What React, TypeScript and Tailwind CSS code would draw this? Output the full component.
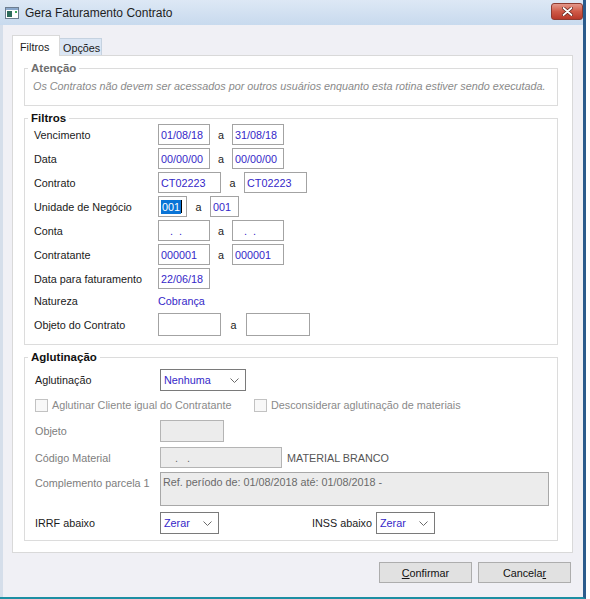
import React from "react";

type FieldProps = { w: string; children?: React.ReactNode; disabled?: boolean; h?: string };

function Field({ w, children, disabled = false, h = "h-[21px]" }: FieldProps) {
  return (
    <div
      className={`flex shrink-0 items-center whitespace-pre border pl-[2px] ${h} ${w} ${
        disabled ? "border-[#b4b4b4] bg-[#ececec] text-[#6a6a6a]" : "border-[#a3a3a3] bg-white text-[#3527c8]"
      }`}
    >
      {children}
    </div>
  );
}

function Sep({ w }: { w: string }) {
  return <span className={`shrink-0 text-center text-[#1a1a1a] ${w}`}>a</span>;
}

function Row({
  label,
  children,
  muted = false,
  lw = "w-[124px]",
  className = "h-[21px]",
}: {
  label: string;
  children?: React.ReactNode;
  muted?: boolean;
  lw?: string;
  className?: string;
}) {
  return (
    <div className={`flex items-center ${className}`}>
      <span className={`shrink-0 whitespace-nowrap ${lw} ${muted ? "text-[#7d7d7d]" : "text-[#1a1a1a]"}`}>{label}</span>
      {children}
    </div>
  );
}

function Combo({ w, value }: { w: string; value: string }) {
  return (
    <div
      className={`flex h-[22px] shrink-0 items-center justify-between border border-[#7a7a7a] bg-white pl-[3px] pr-[6px] text-[#3527c8] ${w}`}
    >
      <span>{value}</span>
      <svg width="9" height="5" viewBox="0 0 9 5" aria-hidden>
        <path d="M0.5 0.5 L4.5 4.5 L8.5 0.5" stroke="#6a6a6a" strokeWidth="1" fill="none" />
      </svg>
    </div>
  );
}

function Check({ label }: { label: string }) {
  return (
    <div className="flex items-center gap-[4px] whitespace-nowrap text-[#8a8a8a]">
      <span className="h-[13px] w-[13px] shrink-0 border border-[#c2c2c2] bg-[#f8f8f8]" />
      <span>{label}</span>
    </div>
  );
}

function Group({
  title,
  muted = false,
  children,
  className = "",
}: {
  title: string;
  muted?: boolean;
  children: React.ReactNode;
  className?: string;
}) {
  return (
    <fieldset className="border border-[#dcdcdc] bg-white">
      <legend
        className={`ml-[3px] px-[3px] text-[11.5px] font-bold leading-[12px] ${
          muted ? "text-[#6e6e6e]" : "text-[#111]"
        }`}
      >
        {title}
      </legend>
      <div className={className}>{children}</div>
    </fieldset>
  );
}

export default function App() {
  return (
    <div className="h-[599px] w-[590px] bg-white font-['Liberation_Sans',Arial,sans-serif] text-[10.8px] leading-[14px] text-[#1a1a1a]">
      <div className="flex h-[599px] w-[586px] flex-col border-r-[3px] border-b-[2px] border-r-[#2b5b8c] border-b-[#1d8fa3]">
        {/* title bar */}
        <div className="flex h-[25px] shrink-0 items-center bg-gradient-to-b from-[#dde8f5] to-[#c8daee] pl-[5px]">
          <svg width="14" height="12" viewBox="0 0 14 12" aria-hidden>
            <rect x="0.5" y="0.5" width="13" height="11" fill="#ffffff" stroke="#6c7d90" />
            <rect x="1" y="1" width="12" height="2" fill="#8aa8cc" />
            <rect x="2" y="4" width="5" height="6" fill="#2e6b5c" />
            <rect x="10" y="4" width="2" height="2" fill="#3fa85a" />
          </svg>
          <span className="ml-[6px] text-[12px] text-[#1e1e1e]">Gera Faturamento Contrato</span>
          <div className="ml-auto mt-[-3px] flex h-[17px] w-[32px] items-center justify-center rounded-[3px] border border-[#8e3b30] bg-gradient-to-b from-[#e3978a] via-[#cf5a47] to-[#b8392a]">
            <svg width="11" height="9" viewBox="0 0 11 9" aria-hidden>
              <path d="M1.5 1 L9.5 8 M9.5 1 L1.5 8" stroke="#5a1b14" strokeWidth="3.2" strokeLinecap="round" />
              <path d="M1.5 1 L9.5 8 M9.5 1 L1.5 8" stroke="#ffffff" strokeWidth="1.8" strokeLinecap="round" />
            </svg>
          </div>
        </div>

        {/* body */}
        <div className="flex flex-1 flex-col border-l-[3px] border-l-[#d5deea] bg-[#f0f0f5] pl-[9px] pr-[10px]">
          {/* tabs */}
          <div className="flex h-[30px] shrink-0 items-end">
            <div className="relative z-10 -mb-px flex h-[21px] w-[48px] items-start border border-b-0 border-[#d9d9d9] bg-white pl-[7px] pt-[4px]">
              Filtros
            </div>
            <div className="flex h-[17px] w-[42px] items-start border border-b-0 border-l-0 border-[#c5d2e0] bg-[#dbe6f4] pl-[3px] pt-[2px]">
              Opções
            </div>
          </div>

          {/* panel */}
          <div className="flex flex-col gap-[6px] border border-[#d9d9d9] bg-white pb-[11px] pl-[11px] pr-[14px] pt-[6px]">
            <Group title="Atenção" muted className="pb-[12px] pl-[8px] pt-[5px]">
              <p className="italic text-[#8a8a8a]">
                Os Contratos não devem ser acessados por outros usuários enquanto esta rotina estiver sendo executada.
              </p>
            </Group>

            <Group title="Filtros" className="flex flex-col gap-[3px] pb-[8px] pl-[9px]">
              <Row label="Vencimento">
                <Field w="w-[52px]">01/08/18</Field>
                <Sep w="w-[22px]" />
                <Field w="w-[52px]">31/08/18</Field>
              </Row>
              <Row label="Data">
                <Field w="w-[52px]">00/00/00</Field>
                <Sep w="w-[22px]" />
                <Field w="w-[52px]">00/00/00</Field>
              </Row>
              <Row label="Contrato">
                <Field w="w-[63px]">CT02223</Field>
                <Sep w="w-[23px]" />
                <Field w="w-[63px]">CT02223</Field>
              </Row>
              <Row label="Unidade de Negócio">
                <Field w="w-[29px]">
                  <span className="bg-[#0a74d6] px-[1px] text-white">001</span>
                  <span className="h-[13px] w-px bg-black" />
                </Field>
                <Sep w="w-[23px]" />
                <Field w="w-[29px]">001</Field>
              </Row>
              <Row label="Conta">
                <Field w="w-[52px]">{"   .  ."}</Field>
                <Sep w="w-[22px]" />
                <Field w="w-[52px]">{"   .  ."}</Field>
              </Row>
              <Row label="Contratante">
                <Field w="w-[52px]">000001</Field>
                <Sep w="w-[22px]" />
                <Field w="w-[52px]">000001</Field>
              </Row>
              <Row label="Data para faturamento">
                <Field w="w-[52px]">22/06/18</Field>
              </Row>
              <Row label="Natureza" className="h-[18px]">
                <span className="text-[#3527c8]">Cobrança</span>
              </Row>
              <Row label="Objeto do Contrato" className="h-[23px]">
                <Field w="w-[63px]" h="h-[23px]" />
                <Sep w="w-[25px]" />
                <Field w="w-[64px]" h="h-[23px]" />
              </Row>
            </Group>

            <Group title="Aglutinação" className="flex flex-col pb-[6px] pl-[10px]">
              <Row label="Aglutinação" lw="w-[125px]" className="mt-[6px] h-[22px]">
                <Combo w="w-[86px]" value="Nenhuma" />
              </Row>
              <div className="mt-[6px] flex h-[16px] items-center">
                <div className="w-[219px] shrink-0">
                  <Check label="Aglutinar Cliente igual do Contratante" />
                </div>
                <Check label="Desconsiderar aglutinação de materiais" />
              </div>
              <Row label="Objeto" muted lw="w-[125px]" className="mt-[7px] h-[22px]">
                <Field w="w-[64px]" h="h-[22px]" disabled />
              </Row>
              <Row label="Código Material" muted lw="w-[125px]" className="mt-[5px] h-[21px]">
                <Field w="w-[122px]" disabled>
                  {"    .   ."}
                </Field>
                <span className="ml-[5px] text-[#555]">MATERIAL BRANCO</span>
              </Row>
              <div className="mt-[4px] flex h-[34px] items-start">
                <span className="w-[125px] shrink-0 pt-[4px] text-[#7d7d7d]">Complemento parcela 1</span>
                <div className="h-[34px] w-[389px] shrink-0 border border-[#a8a8a8] bg-[#ececec] pl-[2px] pt-[2px] text-[#6a6a6a]">
                  Ref. período de: 01/08/2018 até: 01/08/2018 -
                </div>
              </div>
              <div className="mt-[6px] flex h-[22px] items-center">
                <span className="w-[125px] shrink-0 whitespace-nowrap">IRRF abaixo</span>
                <Combo w="w-[59px]" value="Zerar" />
                <span className="ml-[93px] w-[64px] shrink-0 whitespace-nowrap">INSS abaixo</span>
                <Combo w="w-[59px]" value="Zerar" />
              </div>
            </Group>
          </div>

          {/* buttons */}
          <div className="mt-[9px] flex justify-end gap-[6px] pr-[2px]">
            <button className="flex h-[21px] w-[93px] items-center justify-center border border-[#adadad] bg-[#e1e1e1] text-[#111]">
              <span>
                <span className="underline">C</span>onfirmar
              </span>
            </button>
            <button className="flex h-[21px] w-[93px] items-center justify-center border border-[#adadad] bg-[#e1e1e1] text-[#111]">
              <span>
                Cancela<span className="underline">r</span>
              </span>
            </button>
          </div>
        </div>
      </div>
    </div>
  );
}
